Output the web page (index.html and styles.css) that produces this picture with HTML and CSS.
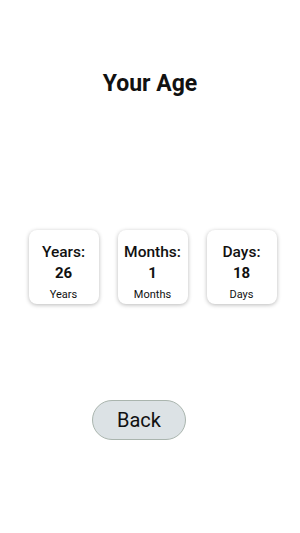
FILE: index.html
```html
<!DOCTYPE html>
<html>
<head>
<meta charset="utf-8">
<link rel="stylesheet" href="styles.css">
</head>
<body>
<div class="screen">
  <h1 class="title">Your Age</h1>
  <div class="cards">
    <div class="card">
      <div class="label">Years:</div>
      <div class="value">26</div>
      <div class="unit">Years</div>
    </div>
    <div class="card">
      <div class="label">Months:</div>
      <div class="value">1</div>
      <div class="unit">Months</div>
    </div>
    <div class="card">
      <div class="label">Days:</div>
      <div class="value">18</div>
      <div class="unit">Days</div>
    </div>
  </div>
  <div class="actions">
    <button class="back">Back</button>
  </div>
</div>
</body>
</html>
```

FILE: styles.css
```css
html, body {
  margin: 0;
  padding: 0;
  background: #ffffff;
}
.screen {
  width: 300px;
  height: 533px;
  display: flex;
  flex-direction: column;
  align-items: center;
  font-family: Roboto, "Noto Sans", sans-serif;
  color: #111;
}
.title {
  margin: 70px 0 0 0;
  font-size: 23px;
  line-height: 28px;
  font-weight: 700;
}
.cards {
  margin-top: 132px;
  margin-left: 5px;
  display: flex;
  gap: 19px;
}
.card {
  width: 70px;
  height: 74px;
  border-radius: 8px;
  background: #fff;
  box-shadow: 0 1px 4px rgba(0, 0, 0, 0.28);
  display: flex;
  flex-direction: column;
  align-items: center;
  box-sizing: border-box;
  padding-top: 12px;
}
.label {
  font-size: 15.5px;
  line-height: 20px;
  font-weight: 500;
}
.value {
  font-size: 15px;
  line-height: 20px;
  font-weight: 700;
  margin-top: 1px;
}
.unit {
  font-size: 11px;
  line-height: 14px;
  font-weight: 400;
  margin-top: 5px;
}
.actions {
  margin-top: 96px;
  align-self: flex-start;
  margin-left: 92px;
}
.back {
  width: 94px;
  height: 40px;
  border-radius: 20px;
  background: #dce2e5;
  border: 1px solid #aab5ae;
  font-family: Roboto, "Noto Sans", sans-serif;
  font-size: 20px;
  color: #111;
  padding: 0;
}
```
